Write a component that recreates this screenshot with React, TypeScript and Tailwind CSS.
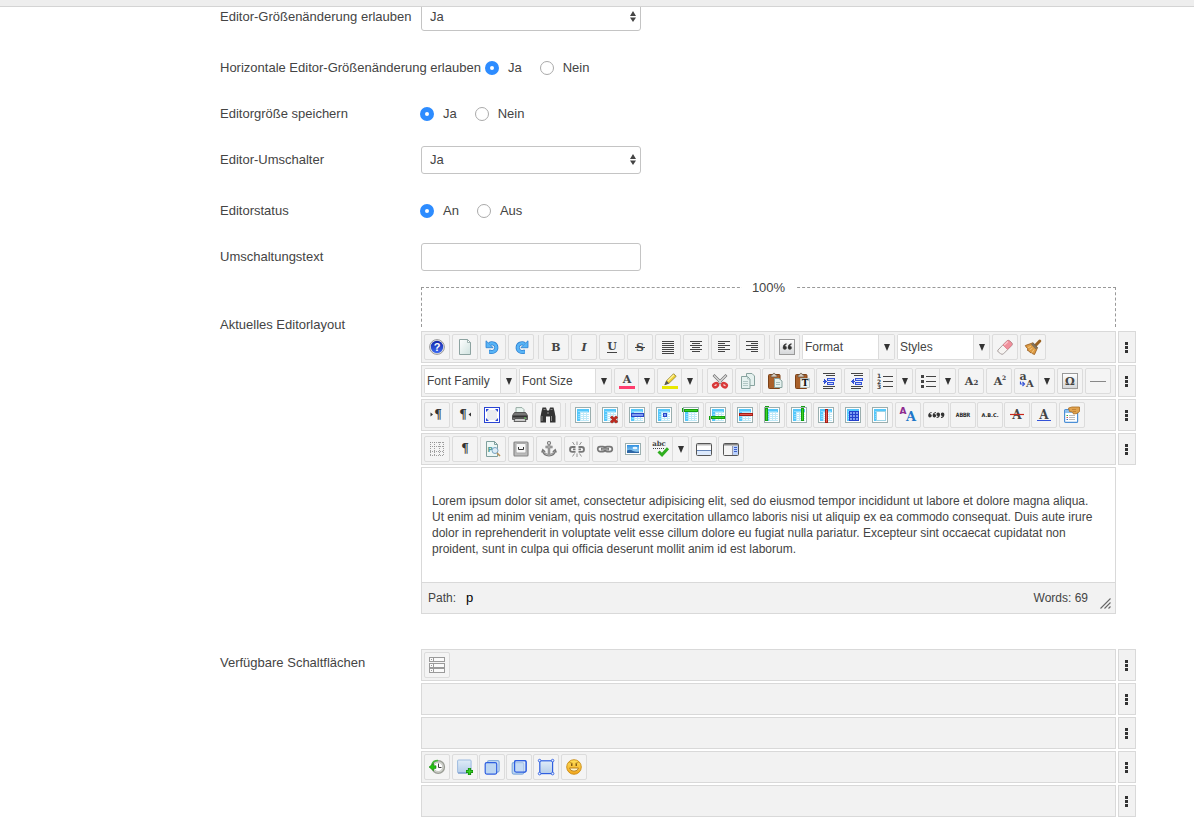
import { useState, type ReactNode } from "react";

const SERIF = "DejaVu Serif, Liberation Serif, serif";
const INK = "#444";

function Letter({ x = 8, y, size = 12, fill = INK, italic = false, family = SERIF, children }: {
  x?: number; y: number; size?: number; fill?: string; italic?: boolean; family?: string; children: string;
}) {
  return (
    <text x={x} y={y} fontSize={size} fontFamily={family} fontWeight="bold" fontStyle={italic ? "italic" : "normal"} textAnchor="middle" fill={fill}>
      {children}
    </text>
  );
}

function Lines({ rows }: { rows: [number, number][] }) {
  return (
    <g fill={INK} shapeRendering="crispEdges">
      {rows.map(([x, w], i) => <rect key={i} x={x} y={2 + i * 2} width={w} height={1} />)}
    </g>
  );
}

function Grid({ children }: { children?: ReactNode }) {
  return (
    <g shapeRendering="crispEdges">
      <rect x=".5" y=".5" width="15" height="15" fill="#fff" stroke="#9aaeae" />
      <rect x="2" y="2" width="12" height="12" fill="#bfe9f8" />
      <path d="M2 2h12v3H5v9H2z" fill="#55c8fb" />
      <path d="M6 6h2v1H6zM9 6h2v1H9zM12 6h2v1h-2zM6 8h2v1H6zM9 8h2v1H9zM12 8h2v1h-2zM6 10h2v1H6zM9 10h2v1H9zM12 10h2v1h-2zM6 12h2v1H6zM9 12h2v1H9zM12 12h2v1h-2z" fill="#fff" />
      <path d="M3 4h10M3 7h2M3 9h2M3 11h2" stroke="#8fdcff" />
      {children}
    </g>
  );
}

function Clipboard() {
  return (
    <>
      <rect x="1.500" y="1.500" width="11.500" height="14" rx="1" fill="#a9602a" stroke="#7c4218" />
      <path d="M4 4V2.200l1.600-.4Q6 .2 7 .2t1.400 1.600l1.600.4V4z" fill="#d9d0c4" stroke="#6d5b49" strokeWidth=".8" />
    </>
  );
}

function CurvedArrow() {
  return (
    <>
      <path d="M4.500 5A4.400 4.400 0 1 1 5.500 12.800H4" fill="none" stroke="#2c7fd0" strokeWidth="4" />
      <path d="M1 1.800V8.700H8.200Z" fill="#58b4f6" stroke="#2c7fd0" strokeWidth=".8" />
      <path d="M4.500 5A4.400 4.400 0 1 1 5.500 12.800H4.300" fill="none" stroke="#58b4f6" strokeWidth="2.600" />
    </>
  );
}

function Pilcrow({ x = 8 }: { x?: number }) {
  return <Letter x={x} y={12} size={12} fill="#333" family="DejaVu Serif, serif">¶</Letter>;
}

function Link() {
  return (
    <g fill="none">
      <rect x=".7" y="5.600" width="7.600" height="5" rx="2.500" stroke="#777" strokeWidth="1.700" />
      <rect x="7.700" y="5.600" width="7.600" height="5" rx="2.500" stroke="#777" strokeWidth="1.700" />
      <path d="M4 8.100h8" stroke="#666" strokeWidth="2.600" />
      <path d="M4.500 8.100h7" stroke="#ccc" strokeWidth=".9" />
    </g>
  );
}

function IndentLines({ dir }: { dir: "in" | "out" }) {
  return (
    <g shapeRendering="crispEdges">
      <path d="M2 .500h12M5 2.500h9M2 15.500h10M2 13.500h12" stroke={INK} />
      <rect x="6.500" y="5.500" width="7" height="2" fill="#c9d5ff" stroke="#3453d8" />
      <rect x="6.500" y="9.500" width="6" height="2" fill="#c9d5ff" stroke="#3453d8" />
      <path d={dir === "in" ? "M2 8h1V6l3 2.500-3 2.500V9H2z" : "M6 8H5V6L2 8.500l3 2.500V9h1z"} fill="#3453d8" />
    </g>
  );
}

function Layers({ flip = false }: { flip?: boolean }) {
  return (
    <>
      <rect x="3.600" y="1.600" width="11.500" height="11.500" rx="1.500" fill={flip ? "none" : "#cfe3f7"} stroke={flip ? "#2f5fe0" : "#86aede"} strokeWidth="1.200" />
      <rect x="1.200" y="3.600" width="11.500" height="11.500" rx="1.500" fill="#bcd6f2" stroke={flip ? "#86aede" : "#2f5fe0"} strokeWidth="1.200" />
      {flip && <rect x="3.600" y="1.600" width="11.500" height="11.500" rx="1.500" fill="#cfe0f5" fillOpacity=".5" stroke="#2f5fe0" strokeWidth="1.200" />}
    </>
  );
}

const full: [number, number] = [2, 12];

const icons: Record<string, ReactNode> = {
  Help: (
    <>
      <circle cx="8" cy="8" r="7.400" fill="#e9e9e9" stroke="#999" />
      <circle cx="8" cy="8" r="6.200" fill="url(#navy)" />
      <Letter y={12} size={11} fill="#fff" family="Liberation Sans, sans-serif">?</Letter>
    </>
  ),
  "New document": (
    <>
      <path d="M2.500.500h8l3 3v12h-11z" fill="url(#paper)" stroke="#8da3a1" />
      <path d="M10.500.500v3h3z" fill="#fff" stroke="#8da3a1" strokeWidth=".8" />
    </>
  ),
  Undo: <CurvedArrow />,
  Redo: <g transform="translate(16) scale(-1 1)"><CurvedArrow /></g>,
  Bold: <Letter y={12} size={11}>B</Letter>,
  Italic: <Letter y={12} size={11} italic>I</Letter>,
  Underline: <><Letter y={11} size={11}>U</Letter><path d="M3 13.500h10" stroke={INK} /></>,
  Strikethrough: <><Letter y={12} size={11}>S</Letter><path d="M3 8.500h10" stroke={INK} /></>,
  Justify: <Lines rows={[full, full, full, full, full, full, full]} />,
  "Align center": <Lines rows={[full, [4, 8], full, [4, 8], full, [4, 8]]} />,
  "Align left": <Lines rows={[full, [2, 7], full, [2, 7], full, [2, 7]]} />,
  "Align right": <Lines rows={[full, [7, 7], full, [7, 7], full, [7, 7]]} />,
  Blockquote: (
    <>
      <rect x=".5" y=".5" width="15" height="15" fill="url(#silver)" stroke="#999" />
      <path d="M7.300 4.600Q4 5.300 4 8.800a1.800 1.800 0 1 0 1.800-1.900Q5.900 5.900 7.300 5.500zM12.300 4.600Q9 5.300 9 8.800a1.800 1.800 0 1 0 1.800-1.900q.1-1 1.500-1.400z" fill="#333" stroke="#333" strokeWidth=".4" />
    </>
  ),
  "Remove formatting": (
    <>
      <path d="M1 11 9.500 2.200Q11 .500 12.800 1.800L15 4q1 1.300-.3 2.600L6.500 14.800Q5 16 3.500 14.600L1.300 13Q.2 12 1 11Z" fill="#f6f4f2" stroke="#a9a09f" />
      <path d="M6 6 9.800 2.200Q11 .800 12.600 2L14.700 4.200q.8 1-.2 2.200L10.500 10.400Z" fill="#f0909c" stroke="#d8707e" strokeWidth=".7" />
      <path d="M7.200 5.900 11 2.400" stroke="#fbc7cd" strokeWidth="1.300" />
    </>
  ),
  "Clean up": (
    <>
      <path d="M10.500 6.500 14.800 2" stroke="#9a6222" strokeWidth="3" strokeLinecap="round" />
      <path d="M.300 6.500 8 3.800 12.500 8.700 9.500 15.500Q7.500 15 6.500 13.800L5 13.500 4 12 2.500 11.500 2.700 9.700Q1 8.500.300 6.500Z" fill="#dc9a42" stroke="#94581a" strokeWidth=".8" />
      <path d="M7.700 4 12.400 9M6.500 4.800l4.800 5.200" stroke="#6d675e" strokeWidth="1.100" />
      <path d="M3 8.500 6 7.500M4.500 11l3-2M7 13.500l2-3" stroke="#f3c67f" />
    </>
  ),
  "Text color": <><Letter y={10} size={11}>A</Letter><path d="M0 13h16v3H0z" fill="#ff3d6e" /></>,
  Highlight: (
    <>
      <path d="M0 13h16v3H0z" fill="#e9e800" />
      <path d="M3 11.600 4.500 7.800 11.600 .700 14.200 3.300 7 10.300Z" fill="#f0d22f" stroke="#8a7c33" strokeWidth=".8" />
      <path d="M2.300 12.300 4.500 7.800 7 10.300Z" fill="#555" />
      <path d="M5.800 7.900 11.800 2" stroke="#fff3a0" strokeWidth="1.200" />
    </>
  ),
  Cut: (
    <>
      <path d="M1.500 2 10.500 11M14.500 2 5.500 11" stroke="#777" strokeWidth="2.600" />
      <path d="M2 2.500 10 10.500M14 2.500 6 10.500" stroke="#ddd" strokeWidth="1.200" />
      <ellipse cx="3.600" cy="12.200" rx="2.600" ry="1.900" fill="#f6d6d6" stroke="#d93a3a" strokeWidth="2.400" transform="rotate(-30 3.600 12.200)" />
      <ellipse cx="12.400" cy="12.200" rx="2.600" ry="1.900" fill="#f6d6d6" stroke="#d93a3a" strokeWidth="2.400" transform="rotate(30 12.400 12.200)" />
    </>
  ),
  Copy: (
    <>
      <path d="M6.500.500h5.500l2.500 2.500v9.500h-8z" fill="#e5f1ef" stroke="#88a39f" />
      <path d="M1.500 3.500h6l2.500 2.500v9.500h-8.500z" fill="#e5f1ef" stroke="#88a39f" />
      <path d="M7.500 3.500v2.500h2.500M3 8.500h5M3 10.500h5M3 12.500h5" fill="none" stroke="#a5bdba" strokeWidth=".8" />
    </>
  ),
  Paste: (
    <>
      <Clipboard />
      <path d="M7.500 5.500h4.500l3 2.500v6.500h-7.500z" fill="#e5f1ef" stroke="#88a39f" />
      <path d="M9 9.500h4M9 11.500h4" stroke="#a5bdba" />
    </>
  ),
  "Paste as text": (
    <>
      <Clipboard />
      <path d="M6.500 5.500h9v9h-9z" fill="#eef4f2" stroke="#b9c4c2" />
      <Letter x={11} y={13} size={9} fill="#111">T</Letter>
    </>
  ),
  Indent: <IndentLines dir="in" />,
  Outdent: <IndentLines dir="out" />,
  "Numbered list": (
    <>
      <path d="M6 3.500h10M6 8.500h10M6 13.500h10" stroke={INK} />
      <g fontSize="6" fontFamily="DejaVu Sans, sans-serif" fontWeight="bold" fill={INK}>
        <text x="0" y="5">1</text><text x="0" y="10.500">2</text><text x="0" y="16">3</text>
      </g>
    </>
  ),
  "Bullet list": (
    <>
      <path d="M6 3.500h10M6 8.500h10M6 13.500h10" stroke={INK} />
      <path d="M1 2h3v3H1zM1 7h3v3H1zM1 12h3v3H1z" fill={INK} />
    </>
  ),
  Subscript: <><Letter x={6} y={12} size={11}>A</Letter><Letter x={13} y={12} size={7}>2</Letter></>,
  Superscript: <><Letter x={7} y={12} size={11}>A</Letter><Letter x={13} y={7} size={6}>2</Letter></>,
  "Change case": (
    <>
      <Letter x={4} y={7} size={11}>a</Letter>
      <Letter x={11} y={14} size={10}>A</Letter>
      <path d="M1.500 8.500v2.500h3M3.500 9l2 2-2 2" fill="none" stroke="#3453d8" strokeWidth="1.200" />
    </>
  ),
  "Special character": (
    <>
      <rect x=".5" y=".5" width="15" height="15" fill="url(#silver)" stroke="#999" />
      <Letter y={12} size={11}>Ω</Letter>
    </>
  ),
  "Horizontal line": <path d="M0 8.500h16" stroke="#888" />,
  "Left to right": <><Pilcrow x={9} /><path d="M1.500 5.500l2.500 2-2.500 2z" fill="#333" /></>,
  "Right to left": <><Pilcrow x={6} /><path d="M14 5.500l-2.500 2 2.500 2z" fill="#333" /></>,
  Fullscreen: (
    <>
      <rect x=".5" y=".5" width="15" height="15" fill="#fff" stroke="#2a45d4" />
      <rect x="3" y="3" width="10" height="10" fill="#eaecef" />
      <path d="M2 5V2h3zM11 2h3v3zM14 11v3h-3zM5 14H2v-3z" fill="#2a45d4" />
    </>
  ),
  Print: (
    <>
      <path d="M4 7V.600h6l2 2V7" fill="#e7f4ef" stroke="#95aaa3" />
      <path d="M2.500 5.500h11l2 3v4h-15v-4z" fill="#777" stroke="#555" />
      <path d="M1 8.500h14v2H1z" fill="#333" />
      <path d="M3 11.500h10l1 3H2z" fill="#ccc" stroke="#444" strokeWidth=".8" />
      <path d="M12 11h2" stroke="#6bd35c" />
    </>
  ),
  Find: (
    <>
      <path d="M2.500.500h3.500l1 3h2l1-3h3.500l1 4 1 5v6h-5.500v-6h-4v6h-5.500v-6l1-5z" fill="#333" />
      <path d="M3.500 2.500h2M10.500 2.500h2M2 9v5M11.500 9v5" stroke="#8a8a8a" />
      <path d="M7 6h2" stroke="#999" />
    </>
  ),
  "Insert table": <Grid />,
  "Delete table": <Grid><path d="M9 9.500l6 6M15 9.500l-6 6" stroke="#b92a20" strokeWidth="3" shapeRendering="auto" /></Grid>,
  "Row properties": <Grid><path d="M2 6.500h12v3H2z" fill="#7f9cf0" stroke="#2947c9" /></Grid>,
  "Cell properties": <Grid><path d="M7.500 6.500h3v3h-3z" fill="#7f9cf0" stroke="#2947c9" /></Grid>,
  "Insert row before": <Grid><path d="M-.5 1v4M1.500 2.500h13v2h-13z" fill="#3ad228" stroke="#14a00f" /></Grid>,
  "Insert row after": <Grid><path d="M-.5 9v4M1.500 9.500h13v2h-13z" fill="#3ad228" stroke="#14a00f" /></Grid>,
  "Delete row": <Grid><path d="M2.500 6.500h13v2h-13z" fill="#e2574c" stroke="#a71d16" /></Grid>,
  "Insert column before": <Grid><path d="M.5-.5h4M1.500 1.500h2v12h-2z" fill="#3ad228" stroke="#14a00f" /></Grid>,
  "Insert column after": <Grid><path d="M9.500-.5h4M10.500 1.500h2v12h-2z" fill="#3ad228" stroke="#14a00f" /></Grid>,
  "Delete column": <Grid><path d="M7.500 2.500h2v13h-2z" fill="#e2574c" stroke="#a71d16" /></Grid>,
  "Split cells": <Grid><path d="M4 4h10v10H4z" fill="#2440cc" /><path d="M5 5h2v2H5zM8 5h2v2H8zM11 5h2v2h-2zM5 8h2v2H5zM8 8h2v2H8zM11 8h2v2h-2zM5 11h2v2H5zM8 11h2v2H8zM11 11h2v2h-2z" fill="#7f9cf0" /></Grid>,
  "Merge cells": <Grid><path d="M4.500 4.500h9v9h-9z" fill="#fff" stroke="#9fd4e6" /></Grid>,
  "Style properties": <><Letter x={3} y={7} size={9} fill="#8d2a8f" family="DejaVu Sans, sans-serif">A</Letter><Letter x={11} y={14} size={13} fill="#1f77c9">A</Letter></>,
  Citation: (
    <path
      d="M3.600 5Q.2 5.400.2 8.800a1.800 1.800 0 1 0 1.700-1.900Q2 6.200 3.600 6zM8 5Q4.600 5.400 4.600 8.800a1.800 1.800 0 1 0 1.700-1.900Q6.400 6.200 8 6zM8.600 11q3.400-.4 3.400-3.800a1.800 1.800 0 1 0-1.700 1.900q-.1.700-1.700.9zM13 11q3.400-.4 3.400-3.800a1.800 1.800 0 1 0-1.700 1.900q-.1.700-1.700.9z"
      fill="#333"
    />
  ),
  Abbreviation: <Letter y={10} size={6} fill="#222" family="DejaVu Sans Mono, monospace">ABBR</Letter>,
  Acronym: <Letter y={10} size={5} fill="#222" family="DejaVu Sans, sans-serif">A.B.C.</Letter>,
  "Deleted text": <><Letter y={12} size={12}>A</Letter><path d="M1 7.500h14" stroke="#c9281c" strokeWidth="1.200" /></>,
  "Inserted text": <><Letter y={12} size={12}>A</Letter><path d="M1 13.500h14" stroke="#3453d8" /></>,
  Attributes: (
    <>
      <rect x=".6" y="2.600" width="13" height="12.800" rx="1" fill="#fff" stroke="#4b8fd6" strokeWidth="1.200" />
      <path d="M1 3h12v3H1z" fill="#8cc0ee" />
      <path d="M5 8.500h6M5 10.500h6M5 12.500h6" stroke="#bbb" />
      <path d="M2.500 8.500h1.500" stroke="#3ab335" /><path d="M2.500 10.500h1.500" stroke="#d9534f" /><path d="M2.500 12.500h1.500" stroke="#3a6fd3" />
      <path d="M4.500 1 8 0h7.500v4.500l-2.500 2-3.500.500-1-2-3-.5z" fill="#e0a24e" stroke="#a96c20" strokeWidth=".8" />
      <path d="M8 2.500h4M9 4.500h3" stroke="#b9772a" strokeWidth=".7" />
    </>
  ),
  "Visual aids": <path d="M1.500 1v14M5.500 1v14M10.500 1v14M14.500 1v14M1 1.500h14M1 5.500h14M1 10.500h14M1 14.500h14" stroke="#888" strokeDasharray="1 1" strokeWidth=".8" />,
  "Visual characters": <Pilcrow />,
  "Page break": (
    <>
      <path d="M1.500.500h8l3 3v12h-11z" fill="#edf7f6" stroke="#7f9f9d" />
      <path d="M9.500.500v3h3" fill="none" stroke="#7f9f9d" />
      <Letter x={5} y={11} size={7} fill="#4c9b94" family="DejaVu Sans, sans-serif">P</Letter>
      <circle cx="10" cy="9.500" r="3" fill="#dcecf7" stroke="#7aa4c0" />
      <path d="M12 12l3 3" stroke="#b7925a" strokeWidth="1.600" />
    </>
  ),
  "Nonbreaking space": (
    <>
      <rect x="1" y="1" width="14" height="14" rx="1" fill="#bbb" stroke="#888" strokeWidth="1.200" />
      <rect x="3" y="2.500" width="10" height="9.500" rx="1" fill="#f7f7f7" stroke="#aaa" />
      <path d="M5.500 6v2.500h5V6" fill="none" stroke="#333" />
    </>
  ),
  Anchor: (
    <>
      <circle cx="8" cy="2" r="1.500" fill="none" stroke="#777" strokeWidth="1.200" />
      <path d="M8 3.500v10M4.500 6h7M2 9.500q.8 4.500 6 4.700 5.200-.2 6-4.700" fill="none" stroke="#777" strokeWidth="2.400" />
      <path d="M0 11.500 1.500 7.500l3.300 3.300zM16 11.500l-1.500-4-3.300 3.300z" fill="#777" />
      <path d="M8 3.500v10M4.500 6h7M2.500 10.500q1.500 3.500 5.500 3.700 4-.2 5.500-3.700" fill="none" stroke="#c4c4c4" strokeWidth=".8" />
    </>
  ),
  Unlink: (
    <>
      <g fill="none" stroke="#777" strokeWidth="1.800">
        <path d="M6.500 6H3.400a2.200 2.200 0 0 0 0 4.800h3.100M9.500 6h3.100a2.200 2.200 0 0 1 0 4.800H9.500M4 8.400h2.500M9.500 8.400H12" />
      </g>
      <path d="M8 .500v3.500M8 12.500v3.500M3.500 1l2 3M12.500 1l-2 3M3.500 15.500l2-3M12.500 15.500l-2-3" stroke="#888" strokeWidth=".9" />
    </>
  ),
  Link: <Link />,
  Image: (
    <>
      <rect x=".5" y="2.500" width="15" height="11" fill="#fff" stroke="#9aaeae" />
      <rect x="2" y="4" width="12" height="8" fill="url(#sky)" />
      <path d="M2 12V9.500q3-1.500 6 .5 3 1 6 .500V12z" fill="#2c66a6" />
      <ellipse cx="10" cy="7" rx="2.500" ry="1.200" fill="#e7f6ff" />
    </>
  ),
  "Spell check": (
    <>
      <Letter x={6} y={5} size={7} family="DejaVu Serif, serif">abc</Letter>
      <path d="M0 7.500h11" stroke={INK} strokeDasharray="1 1" />
      <path d="M5.500 10.500 9 13.800 15 7.200" fill="none" stroke="#2fae1f" strokeWidth="3" />
    </>
  ),
  "Intro text": (
    <>
      <rect x=".5" y="2.500" width="15" height="12" rx="1" fill="#fff" stroke="#555" />
      <path d="M1 3h14v1.500H1z" fill="#bbb" />
      <path d="M1 9.500h14v4.500H1z" fill="#dce9fb" /><path d="M1 9.500h14" stroke="#6484b8" />
    </>
  ),
  "Page layout": (
    <>
      <rect x=".5" y="2.500" width="15" height="12" rx="1" fill="#f4f4f4" stroke="#555" />
      <path d="M1 3h14v1.500H1z" fill="#888" />
      <path d="M9.500 5v9" stroke="#99a" />
      <path d="M10 5h5v9h-5z" fill="#bcd2fb" /><path d="M11 6.500h3M11 8.500h3M11 10.500h3" stroke="#3d5fc9" />
    </>
  ),
  "Layout blocks": (
    <g fill="#fafafa" stroke="#9a9a9a" shapeRendering="crispEdges">
      <path d="M.5.500h15v4H.5zM.5 6.500h15v4H.5zM.5 11.500h15v4H.5zM4.500.500v4M4.500 6.500v4M4.500 11.500v4" />
      <path d="M2 2.500h1M2 8.500h1M2 13.500h1" />
    </g>
  ),
  "Restore draft": (
    <>
      <circle cx="9.200" cy="8" r="6.300" fill="#d5d7d1" stroke="#9a9d95" strokeWidth="1.300" />
      <circle cx="9.200" cy="8" r="4.500" fill="#fff" stroke="#b5b8b0" strokeWidth=".7" />
      <path d="M9.500 4.500v4H12.500" fill="none" stroke="#444" />
      <path d="M9 1.500Q3.500 1.500 3 6" fill="none" stroke="#43b83a" strokeWidth="1.600" />
      <path d="M0 8l4.500-3.500v2.300H7v2.600H4.500v2.300z" fill="#22c40f" stroke="#118208" strokeWidth=".6" />
    </>
  ),
  "Insert layer": (
    <>
      <rect x=".6" y="1" width="13.500" height="13" rx="1" fill="url(#glass)" stroke="#9dbbe0" />
      <path d="M1 14h9" stroke="#6d8fc8" />
      <path d="M12.500 9v7M9 12.500h7" stroke="#12850b" strokeWidth="3.200" />
      <path d="M12.500 9.500v6M9.500 12.500h6" stroke="#35cf22" strokeWidth="1.600" />
    </>
  ),
  "Move forward": <Layers />,
  "Move backward": <Layers flip />,
  "Absolute layer": (
    <>
      <rect x="1.800" y="1.800" width="12.800" height="12.800" fill="url(#glass)" stroke="#2f5fe0" strokeWidth="1.200" />
      <g fill="#e8f0ff" stroke="#2f5fe0" strokeWidth=".9"><circle cx="1.600" cy="1.600" r="1.300" /><circle cx="14.600" cy="1.600" r="1.300" /><circle cx="1.600" cy="14.600" r="1.300" /><circle cx="14.600" cy="14.600" r="1.300" /></g>
    </>
  ),
  Emoticons: (
    <>
      <circle cx="8" cy="8" r="7.300" fill="url(#smile)" stroke="#c98a12" strokeWidth=".9" />
      <path d="M3.500 3.500l3 .8M12.500 3.500l-3 .8" stroke="#a8700f" strokeWidth=".7" />
      <path d="M5.800 4.500v2.500M10.200 4.500v2.500" stroke="#5d3a06" strokeWidth="1.100" />
      <path d="M3.500 9h9q-.6 3.200-4.500 3.200T3.500 9z" fill="#fff3c4" stroke="#a86c0b" strokeWidth=".8" />
    </>
  ),
};

function Icon({ name }: { name: string }) {
  return <svg viewBox="0 0 16 16" className="size-4 overflow-visible" aria-hidden="true">{icons[name]}</svg>;
}

function Caret() {
  return <svg viewBox="0 0 6 7" className="h-[7px] w-1.5" aria-hidden="true"><path d="M0 0h6L3 7z" fill="#333" /></svg>;
}

function Tool({ name }: { name: string }) {
  return (
    <button type="button" aria-label={name} className="flex size-[26px] shrink-0 items-center justify-center rounded-xs border border-[#dcdcdc] bg-[#f4f4f4]">
      <Icon name={name} />
    </button>
  );
}

function SplitTool({ name }: { name: string }) {
  return (
    <div className="flex h-[26px] w-[41px] shrink-0 rounded-xs border border-[#dcdcdc] bg-[#f4f4f4]">
      <button type="button" aria-label={name} className="flex w-6 shrink-0 items-center justify-center border-r border-[#dcdcdc]">
        <Icon name={name} />
      </button>
      <button type="button" aria-label={`${name} options`} className="flex flex-1 items-center justify-center">
        <Caret />
      </button>
    </div>
  );
}

function ListTool({ name }: { name: string }) {
  return (
    <div className="relative h-[26px] w-[93px] shrink-0 rounded-xs border border-[#dcdcdc] bg-white">
      <select aria-label={name} className="h-full w-full appearance-none bg-white pl-0.5 text-xs text-[#444] outline-none">
        <option>{name}</option>
      </select>
      <span className="pointer-events-none absolute inset-y-0 right-0 flex w-4 items-center justify-center border-l border-[#dcdcdc] bg-[#f4f4f4]">
        <Caret />
      </span>
    </div>
  );
}

type Item = string | string[];

const lists = new Set(["Format", "Styles", "Font Family", "Font Size"]);
const splits = new Set(["Text color", "Highlight", "Numbered list", "Bullet list", "Change case", "Spell check"]);

const activeRows: Item[][] = [
  ["Help", "New document", "Undo", "Redo", "|", "Bold", "Italic", "Underline", "Strikethrough", "Justify", "Align center", "Align left", "Align right", "|", "Blockquote", "Format", "Styles", "Remove formatting", "Clean up"],
  ["Font Family", "Font Size", "Text color", "Highlight", "|", "Cut", ["Copy", "Paste", "Paste as text", "Indent"], "Outdent", "Numbered list", "Bullet list", "Subscript", "Superscript", "Change case", "Special character", "Horizontal line"],
  ["Left to right", ["Right to left", "Fullscreen"], "Print", "Find", "|",
    ["Insert table", "Delete table", "Row properties", "Cell properties", "Insert row before", "Insert row after", "Delete row", "Insert column before", "Insert column after", "Delete column", "Split cells", "Merge cells"],
    "Style properties", ["Citation", "Abbreviation", "Acronym", "Deleted text", "Inserted text"], "Attributes"],
  ["Visual aids", "Visual characters", "Page break", "Nonbreaking space", "Anchor", "Unlink", "Link", "Image", "Spell check", ["Intro text", "Page layout"]],
];

const availableRows: Item[][] = [
  ["Layout blocks"],
  [],
  [],
  ["Restore draft", ["Insert layer", "Move forward", "Move backward", "Absolute layer"], "Emoticons"],
  [],
];

function ToolItem({ item }: { item: Item }) {
  if (Array.isArray(item)) return <div className="flex gap-px">{item.map((name) => <Tool key={name} name={name} />)}</div>;
  if (item === "|") return <span className="mx-0.5 h-6 w-px shrink-0 self-center bg-[#dcdcdc]" />;
  if (lists.has(item)) return <ListTool name={item} />;
  if (splits.has(item)) return <SplitTool name={item} />;
  return <Tool name={item} />;
}

function ToolbarRow({ items }: { items: Item[] }) {
  return (
    <div className="flex gap-0.5">
      <div className="flex h-8 min-w-0 flex-1 gap-0.5 border border-[#d9d9d9] bg-[#f2f2f2] p-0.5">
        {items.map((item, i) => <ToolItem key={i} item={item} />)}
      </div>
      <button type="button" aria-label="Move row" className="flex w-[18px] flex-col items-center justify-center gap-px border border-[#d9d9d9] bg-[#f2f2f2] pr-px">
        <span className="size-[3px] bg-[#333]" />
        <span className="size-[3px] bg-[#333]" />
        <span className="size-[3px] bg-[#333]" />
      </button>
    </div>
  );
}

const labelStyle = "min-w-[196px] whitespace-nowrap";
const fieldStyle = "h-7 w-full rounded-[3px] border border-[#c4c4c4] bg-white px-2 text-[13px] text-[#444] outline-none";

function SelectRow({ id, label }: { id: string; label: string }) {
  return (
    <div className="mb-[23px] flex h-7 items-center gap-1">
      <label htmlFor={id} className={labelStyle}>{label}</label>
      <div className="relative ml-px w-[220px]">
        <select id={id} className={`${fieldStyle} appearance-none`}>
          <option>Ja</option>
          <option>Nein</option>
        </select>
        <svg viewBox="0 0 6 11" className="pointer-events-none absolute top-2 right-[5px] h-[11px] w-1.5" aria-hidden="true">
          <path d="M3 0l3 5H0zM3 11l3-4.500H0z" fill="#444" />
        </svg>
      </div>
    </div>
  );
}

function RadioRow({ id, label, options }: { id: string; label: string; options: string[] }) {
  const [value, setValue] = useState(options[0]);
  return (
    <div role="radiogroup" aria-labelledby={id} className="mb-[18px] flex h-7 items-center gap-1">
      <span id={id} className={labelStyle}>{label}</span>
      <div className="flex gap-[18px]">
        {options.map((option) => (
          <label key={option} className="flex items-center gap-[9px]">
            <input
              type="radio"
              name={id}
              checked={value === option}
              onChange={() => setValue(option)}
              className="size-3.5 appearance-none rounded-full border border-[#aaa] bg-white checked:border-5 checked:border-[#2d8cff]"
            />
            {option}
          </label>
        ))}
      </div>
    </div>
  );
}

export default function App() {
  return (
    <div className="min-h-screen bg-white font-['Liberation_Sans',Arial,sans-serif] text-[13px] leading-5 text-[#444]">
      <svg className="absolute size-0" aria-hidden="true">
        <defs>
          <linearGradient id="navy" x2="0" y2="1"><stop stopColor="#1226a8" /><stop offset="1" stopColor="#3f6cf0" /></linearGradient>
          <linearGradient id="paper" x2="1" y2="1"><stop stopColor="#fff" /><stop offset="1" stopColor="#cfe2df" /></linearGradient>
          <linearGradient id="silver" x2="0" y2="1"><stop stopColor="#fff" /><stop offset="1" stopColor="#d4d6d8" /></linearGradient>
          <linearGradient id="sky" x2="0" y2="1"><stop stopColor="#2f8fe0" /><stop offset="1" stopColor="#a8dbf7" /></linearGradient>
          <linearGradient id="glass" x2="0" y2="1"><stop stopColor="#e0ecf8" /><stop offset="1" stopColor="#b5cdea" /></linearGradient>
          <linearGradient id="smile" x2="0" y2="1"><stop stopColor="#ffe15a" /><stop offset="1" stopColor="#f2a51d" /></linearGradient>
        </defs>
      </svg>
      <header className="fixed inset-x-0 top-0 z-10 h-[7px] border-b border-[#d4d4d4] bg-[#eee]" />
      <main className="pt-[3px] pr-[58px] pb-2 pl-[220px]">
        <SelectRow id="resizing" label="Editor-Größenänderung erlauben" />
        <RadioRow id="horizontal" label="Horizontale Editor-Größenänderung erlauben" options={["Ja", "Nein"]} />
        <RadioRow id="remember" label="Editorgröße speichern" options={["Ja", "Nein"]} />
        <SelectRow id="toggle" label="Editor-Umschalter" />
        <RadioRow id="state" label="Editorstatus" options={["An", "Aus"]} />
        <div className="mb-4 flex h-7 items-center gap-1">
          <label htmlFor="toggle-text" className={labelStyle}>Umschaltungstext</label>
          <div className="ml-px w-[220px]"><input id="toggle-text" type="text" className={fieldStyle} /></div>
        </div>

        <section className="flex" aria-labelledby="layout-title">
          <h2 id="layout-title" className="w-[201px] shrink-0 pt-7">Aktuelles Editorlayout</h2>
          <div className="flex min-w-0 flex-1 flex-col gap-0.5">
            <div className="mr-5 mb-0.5 flex h-10 justify-center border border-b-0 border-dashed border-[#999]">
              <span className="-mt-2.5 h-5 w-[54px] bg-white text-center">100%</span>
            </div>
            {activeRows.map((items, i) => <ToolbarRow key={i} items={items} />)}
            <div className="mr-5 border border-[#d9d9d9] text-xs">
              <p className="min-h-[114px] py-[25px] pr-4 pl-2.5 leading-4">
                Lorem ipsum dolor sit amet, consectetur adipisicing elit, sed do eiusmod tempor incididunt ut labore et dolore magna aliqua. Ut enim ad minim veniam, quis nostrud exercitation ullamco laboris nisi ut aliquip ex ea commodo consequat. Duis aute irure dolor in reprehenderit in voluptate velit esse cillum dolore eu fugiat nulla pariatur. Excepteur sint occaecat cupidatat non proident, sunt in culpa qui officia deserunt mollit anim id est laborum.
              </p>
              <footer className="flex h-[31px] items-center border-t border-[#d9d9d9] bg-[#f2f2f2] pr-1 pl-1.5">
                <span>Path:</span>
                <a href="#path" className="ml-2.5 text-[13px] text-black">p</a>
                <span className="ml-auto">Words: 69</span>
                <svg viewBox="0 0 11 11" className="mb-1 ml-3 size-[11px] self-end" aria-hidden="true">
                  <path d="M.5 10.500l10-10M4.500 10.500l6-6M8.500 10.500l2-2" stroke="#666" strokeWidth="1.100" />
                </svg>
              </footer>
            </div>
          </div>
        </section>

        <section className="mt-[35px] flex" aria-labelledby="available-title">
          <h2 id="available-title" className="w-[201px] shrink-0 pt-1">Verfügbare Schaltflächen</h2>
          <div className="flex min-w-0 flex-1 flex-col gap-0.5">
            {availableRows.map((items, i) => <ToolbarRow key={i} items={items} />)}
          </div>
        </section>
      </main>
    </div>
  );
}
